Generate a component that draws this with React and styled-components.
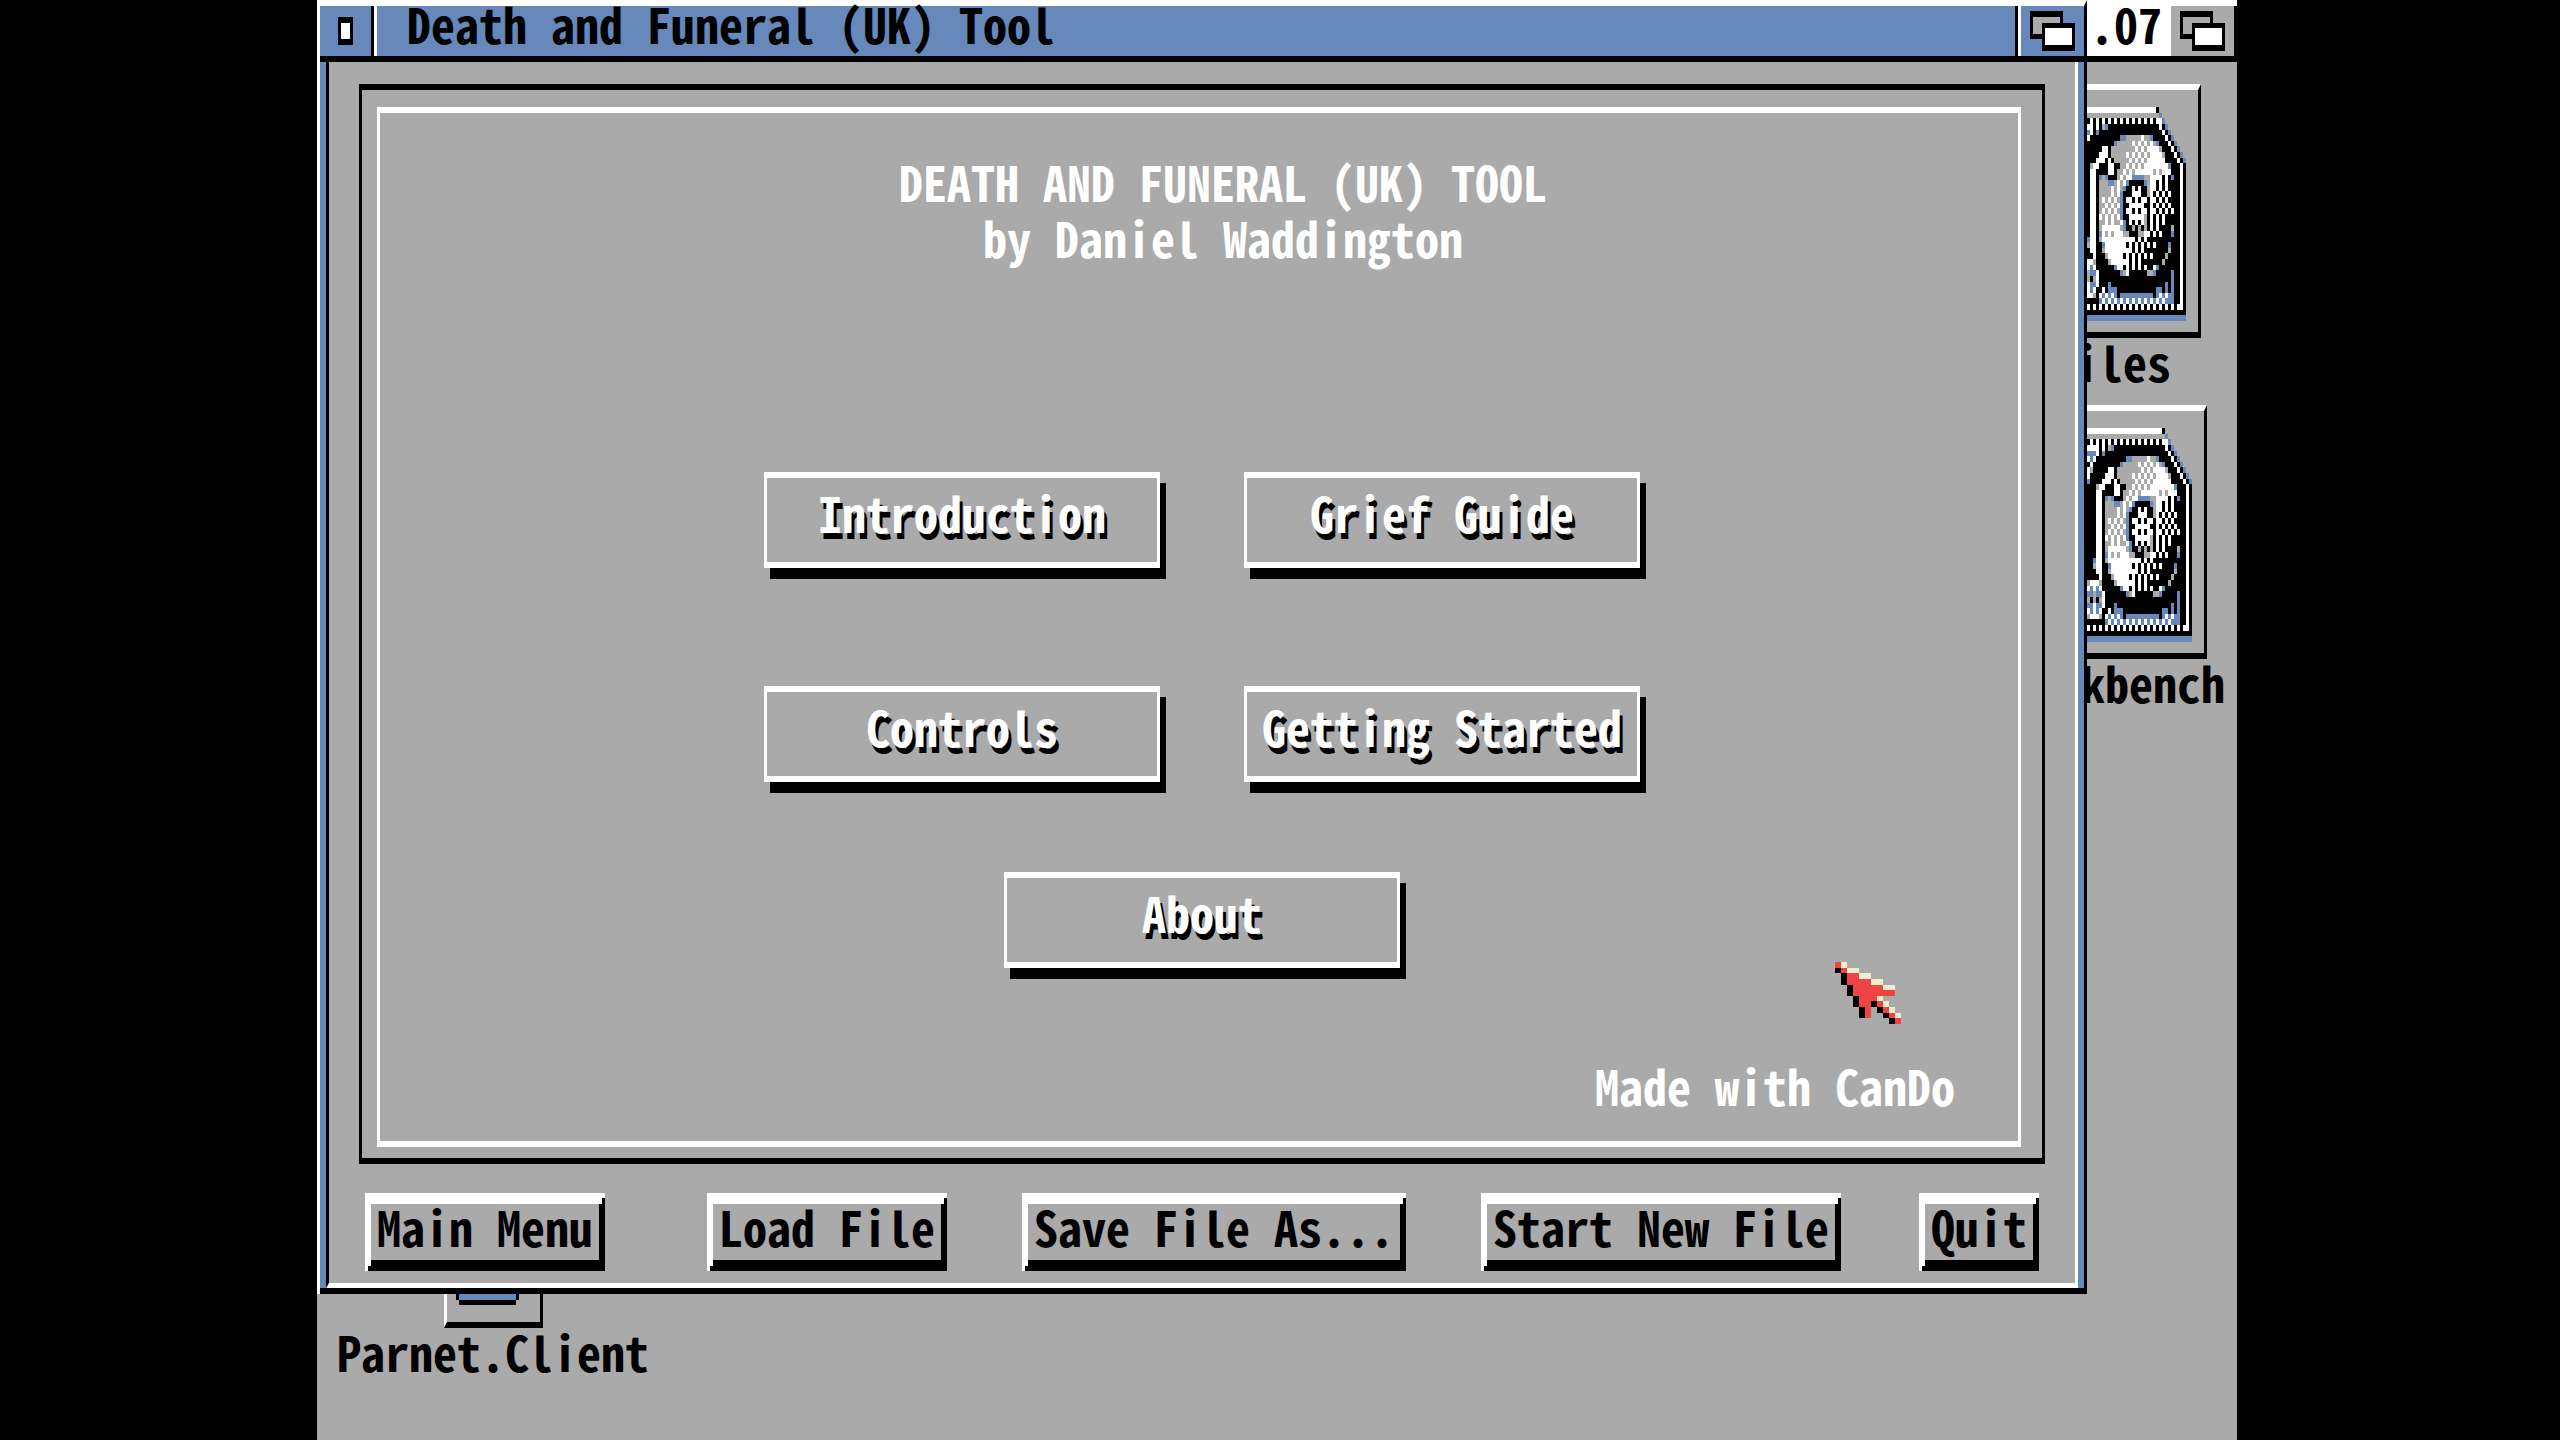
import React from "react";
import styled, { createGlobalStyle, css } from "styled-components";

const grey = "#aaaaaa";
const blue = "#6688bb";
const black = "#000000";
const white = "#ffffff";

const GlobalStyle = createGlobalStyle`
  *, *::before, *::after { box-sizing: border-box; }
  body { margin: 0; background: ${black}; }
  button, h1, h2, p, footer { margin: 0; }
`;

const type = css`
  font-family: "Noto Sans Mono CJK JP", "DejaVu Sans Mono", monospace;
  font-size: 48px;
  font-weight: 700;
  line-height: 48px;
  white-space: pre;
`;

const Backdrop = styled.div`
  display: flex;
  justify-content: center;
  padding-right: 6px;
  background: ${black};
`;

const Screen = styled.main`
  position: relative;
  display: flex;
  flex-direction: column;
  flex: 0 1 1920px;
  min-height: 100vh;
  padding: 0 150px 146px 0;
  overflow: hidden;
  background: ${grey};
  color: ${black};
  ${type}
`;

const ScreenBar = styled.div`
  position: absolute;
  top: 0;
  left: 0;
  right: 0;
  display: flex;
  justify-content: flex-end;
  height: 62px;
  padding-right: 3px;
  border-top: 6px solid ${white};
  border-bottom: 6px solid ${black};
  background: linear-gradient(to left, ${black} 3px, ${white} 3px);
`;

const Version = styled.span`
  padding-right: 9px;
  line-height: 34px;
`;

const DepthButton = styled.button`
  width: 63px;
  padding: 5px 9px;
  border: 0;
  background: ${(p) => p.$fill};
  svg { display: block; }
`;

const DeskIcon = styled.figure`
  position: absolute;
  top: ${(p) => p.$top}px;
  ${(p) => p.$side}: ${(p) => p.$inset}px;
  display: flex;
  flex-direction: column;
  align-items: center;
  margin: 0;
`;

const DeskFrame = styled.div`
  display: flex;
  justify-content: ${(p) => p.$align};
  width: ${(p) => p.$width}px;
  padding: ${(p) => p.$pad};
  border-style: solid;
  border-width: 6px 3px;
  border-color: ${white} ${black} ${black} ${white};
  svg { display: block; }
`;

const DeskLabel = styled.figcaption`
  line-height: 46px;
`;

const Window = styled.section`
  position: relative;
  display: flex;
  flex: 1;
  flex-direction: column;
  border-top: 6px solid ${white};
  border-left: 3px solid ${white};
  border-right: 3px solid ${black};
  background: ${black};
`;

const TitleBar = styled.header`
  display: flex;
  height: 56px;
  border-bottom: 6px solid ${black};
  background: ${blue};
`;

const CloseButton = styled.button`
  display: grid;
  place-items: center;
  width: 51px;
  border: 0;
  background: ${blue};
  &::before {
    content: "";
    width: 15px;
    height: 28px;
    border: solid ${black};
    border-width: 6px 3px;
    background: ${white};
  }
`;

const Divider = styled.span`
  width: 6px;
  border-left: 3px solid ${black};
  border-right: 3px solid ${white};
`;

const Title = styled.h1`
  flex: 1;
  padding-left: 30px;
  font-size: inherit;
  line-height: 34px;
`;

const Body = styled.div`
  display: flex;
  flex: 1;
  flex-direction: column;
  margin-bottom: 6px;
  border-left: 6px solid ${blue};
  border-right: 6px solid ${blue};
`;

const Client = styled.div`
  display: flex;
  flex: 1;
  flex-direction: column;
  padding: 22px 30px 12px;
  border-left: 3px solid ${black};
  border-right: 3px solid ${white};
  border-bottom: 5px solid ${white};
  background: ${grey};
`;

const OuterFrame = styled.div`
  display: flex;
  flex: 1;
  padding: 17px 21px 11px 15px;
  border: solid ${black};
  border-width: 6px 3px;
`;

const Card = styled.div`
  display: flex;
  flex: 1;
  flex-direction: column;
  border: solid ${white};
  border-width: 6px 3px;
  color: ${white};
`;

const Heading = styled.div`
  padding: 40px 0 0 48px;
  text-align: center;
  h2, p { font-size: inherit; font-weight: inherit; line-height: 56px; }
`;

const Menu = styled.nav`
  display: grid;
  grid-template-columns: 396px 396px;
  justify-content: center;
  gap: 118px 84px;
  padding: 207px 0 0 6px;
`;

const MenuButton = styled.button`
  ${type}
  width: 396px;
  height: 96px;
  padding: 0 0 16px;
  border: solid ${white};
  border-width: 6px 3px;
  background: ${grey};
  box-shadow: 6px 11px 0 ${black};
  color: ${white};
  text-shadow: 3px 6px 0 ${black};
  ${(p) => p.$wide && css`
    grid-column: 1 / -1;
    justify-self: center;
    margin-top: -28px;
  `}
`;

const Credit = styled.p`
  margin-top: auto;
  padding: 0 63px 28px 0;
  line-height: 56px;
  text-align: right;
`;

const Toolbar = styled.footer`
  display: grid;
  grid-template-columns: 342fr 315fr 459fr 438fr 120fr;
  padding: 29px 6px 0;
`;

const ToolButton = styled.button`
  ${type}
  width: ${(p) => p.$width}px;
  height: 78px;
  padding: 0 0 12px;
  border: 0;
  background: ${grey};
  box-shadow:
    inset 3px 0 ${white}, inset 0 5px ${white},
    inset 0 -5px ${black}, inset -3px 0 ${black},
    inset 6px 0 ${white}, inset 0 11px ${white},
    inset 0 -11px ${black}, inset -6px 0 ${black};
  color: ${black};
`;

const Pointer = styled.div`
  position: absolute;
  top: 962px;
  left: 1518px;
  pointer-events: none;
  svg { display: block; }
`;

const palette = { "#": black, w: white, b: blue, r: "#ee4444", c: "#eeeecc" };

function Bitmap({ rows, width, height }) {
  const cols = Math.max(...rows.map((r) => r.length));
  const cells = [];
  rows.forEach((row, y) => {
    let x = 0;
    while (x < row.length) {
      let end = x + 1;
      while (end < row.length && row[end] === row[x]) end += 1;
      if (palette[row[x]]) {
        cells.push(<rect key={`${x}-${y}`} x={x} y={y} width={end - x} height="1" fill={palette[row[x]]} />);
      }
      x = end;
    }
  });
  return (
    <svg width={width} height={height} viewBox={`0 0 ${cols} ${rows.length}`} preserveAspectRatio="none" shapeRendering="crispEdges" aria-hidden="true">
      {cells}
    </svg>
  );
}

const edge = "##w#";
const disk = [
  "w".repeat(25) + "#.........",
  ".".repeat(26) + "b........",
  "#w".repeat(13) + "wb.......",
  "wwww#w#.b" + "#".repeat(17) + "w#b......",
  "bbbw#b" + "#".repeat(21) + "w#b.....",
  "wbw#" + "#".repeat(9) + "bb.....w..b####w#b....",
  "#w" + "#".repeat(9) + "b.....w.w.w.w.b###w#b...",
  "w.#####ww#........w.w.wwww.###w#b..",
  "w#####www#.....w.w.w.w.wwww.###w#b.",
  "b####www#w#.....w.w.w.wwwwww####w#b",
  "###.ww###ww##..w.w.w.wwwwwwwwb#" + edge,
  "###ww####ww#..w.w.wwwwww.w.www#" + edge,
  "###ww#b.b###.w.wwbbbb..wwww#w#b" + edge,
  "###ww#...bb.w.wb#####b.ww#w#w##" + edge,
  "###ww#....w.w.b##w#w##.ww#w#w##" + edge,
  "###ww#....w.wb###www##.w#w#w#w#" + edge,
  "###ww#.w.w.w.b#ww#w#ww#ww#w#w##" + edge,
  "###ww#..w.w.wb##wwwww##w#w#w#w#" + edge,
  "###ww#.w.w.w.b#ww#w#ww#ww#w#w#w" + edge,
  "###ww#w.w.w.wb##wwwww.#w#w#w###" + edge,
  "###ww#..w.w..wb#w#w#w.#w#w#w###" + edge,
  "###ww#.wwwwww.b##.#.#.#w#w####." + edge,
  "###ww#bw.w.www..###..ww#w#w###b" + edge,
  "##bww#.wwwwwwwwwww#w#w#########" + edge,
  "##.ww##bwwwwwww#w#w#w#w#w####b#" + edge,
  "###ww##.wwwwwwwww#w#w########.#" + edge,
  "####w###.wwwww#w#w#w#w#w####.##" + edge,
  ".www.####.wwwwww#w#w#######.###" + edge,
  "wbwbw######bww#w#w#w#w##wb#####" + edge,
  "bb.bbw#######b.w######..b#####b" + edge,
  ".#.#.w########################b" + edge,
  "bbwbbw###b##################b#b" + edge,
  "wbwbw##w#bbb#############bb#b#b" + edge,
  ".www.#wbwbwb#bbbbbbbbbbb#bwbwbb" + edge,
  "######bwbwbwbwbwbwbwbwbwbwbwbbb" + edge,
  "w#".repeat(16) + "ww#",
  "#".repeat(35),
  "b".repeat(35),
];

const pointer = [
  "rc",
  "#rcc",
  ".#rrcc",
  ".#rrrrcc",
  "..#rrrrrcc",
  "..#rrrrrrr",
  "...#rrrc",
  "...#rr#rc",
  "....#r.#rc",
  "....#r..#rc",
  ".........#r",
];

const clientLaptop = ["#bbbbbbbbbbbbbbbbbbb#", ".###################."];

function DepthIcon() {
  return (
    <svg width="45" height="40" viewBox="0 0 45 40" shapeRendering="crispEdges" aria-hidden="true">
      <path fill={black} d="M0 0H33V28H0Z" />
      <path fill={grey} d="M3 6H30V23H3Z" />
      <path fill={black} d="M12 12H45V40H12Z" />
      <path fill={white} d="M15 17H42V34H15Z" />
    </svg>
  );
}

const menuItems = ["Introduction", "Grief Guide", "Controls", "Getting Started"];

const tools = [
  { label: "Main Menu", width: 240 },
  { label: "Load File", width: 240 },
  { label: "Save File As...", width: 384 },
  { label: "Start New File", width: 360 },
  { label: "Quit", width: 120 },
];

export default function App() {
  return (
    <Backdrop>
      <GlobalStyle />
      <Screen>
        <ScreenBar>
          <Version>.07</Version>
          <DepthButton $fill={grey} aria-label="Screen depth"><DepthIcon /></DepthButton>
        </ScreenBar>
        <DeskIcon $top={84} $side="right" $inset={36}>
          <DeskFrame $width={180} $align="flex-end" $pad="17px 12px 11px">
            <Bitmap rows={disk} width={105} height={214} />
          </DeskFrame>
          <DeskLabel>Files</DeskLabel>
        </DeskIcon>
        <DeskIcon $top={405} $side="right" $inset={12}>
          <DeskFrame $width={180} $align="flex-end" $pad="17px 12px 11px">
            <Bitmap rows={disk} width={105} height={214} />
          </DeskFrame>
          <DeskLabel>Workbench</DeskLabel>
        </DeskIcon>
        <DeskIcon $top={1228} $side="left" $inset={20}>
          <DeskFrame $width={99} $align="flex-start" $pad="60px 9px 17px">
            <Bitmap rows={clientLaptop} width={63} height={11} />
          </DeskFrame>
          <DeskLabel>Parnet.Client</DeskLabel>
        </DeskIcon>

        <Window>
          <TitleBar>
            <CloseButton aria-label="Close" />
            <Divider />
            <Title>Death and Funeral (UK) Tool</Title>
            <Divider />
            <DepthButton $fill={blue} aria-label="Window depth"><DepthIcon /></DepthButton>
          </TitleBar>
          <Body>
            <Client>
              <OuterFrame>
                <Card>
                  <Heading>
                    <h2>DEATH AND FUNERAL (UK) TOOL</h2>
                    <p>by Daniel Waddington</p>
                  </Heading>
                  <Menu>
                    {menuItems.map((item) => (
                      <MenuButton key={item} type="button">{item}</MenuButton>
                    ))}
                    <MenuButton type="button" $wide>About</MenuButton>
                  </Menu>
                  <Credit>Made with CanDo</Credit>
                </Card>
              </OuterFrame>
              <Toolbar>
                {tools.map((tool) => (
                  <ToolButton key={tool.label} type="button" $width={tool.width}>{tool.label}</ToolButton>
                ))}
              </Toolbar>
            </Client>
          </Body>
        </Window>
        <Pointer><Bitmap rows={pointer} width={66} height={62} /></Pointer>
      </Screen>
    </Backdrop>
  );
}
